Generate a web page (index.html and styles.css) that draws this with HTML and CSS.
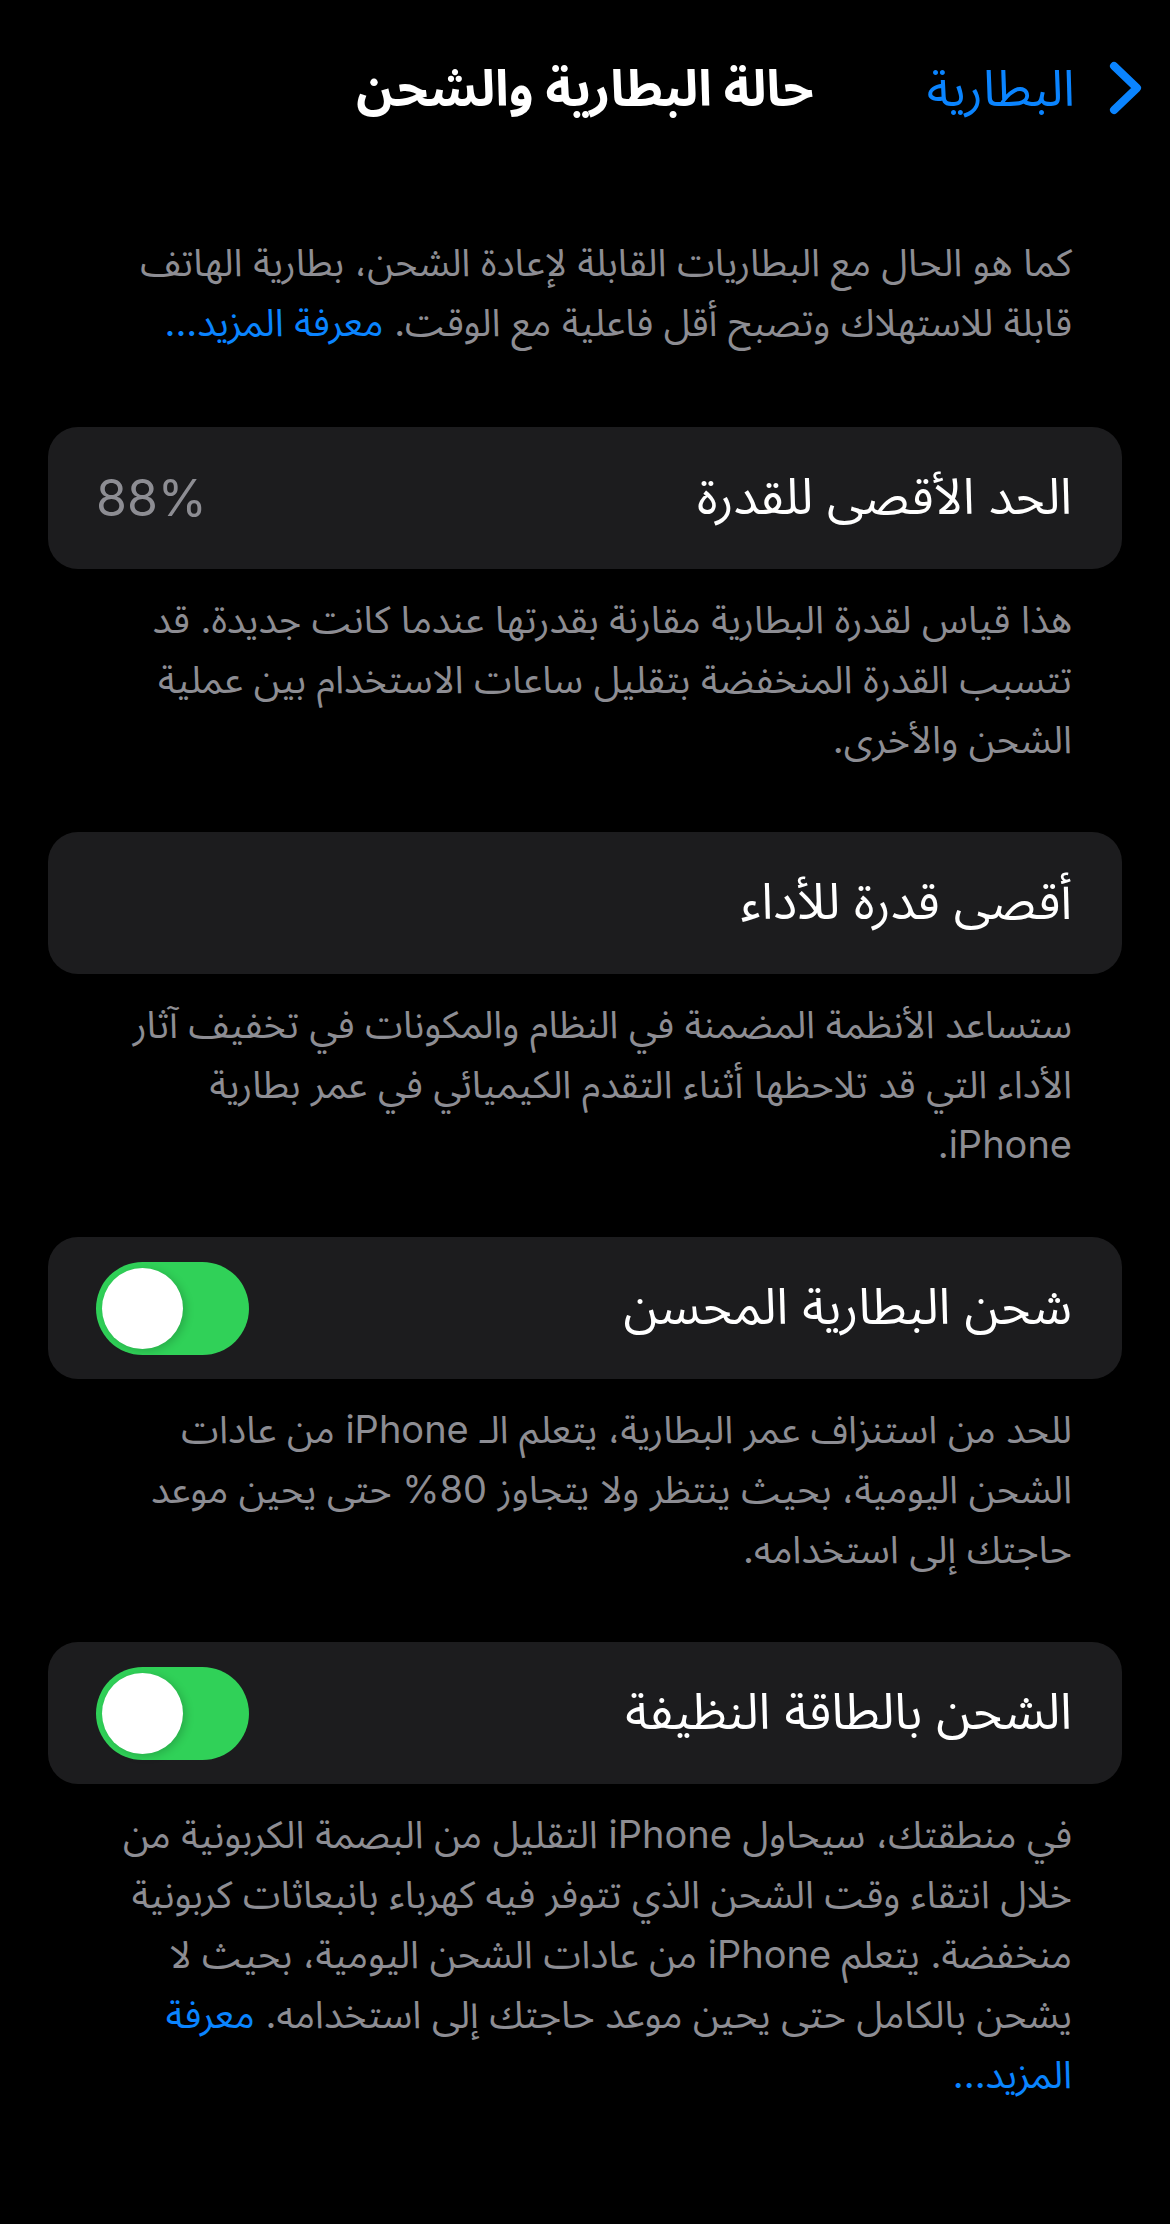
FILE: index.html
```html
<!DOCTYPE html>
<html lang="ar" dir="rtl">
<head>
<meta charset="utf-8">
<title>حالة البطارية والشحن</title>
<link rel="stylesheet" href="styles.css">
</head>
<body>
<div class="screen">
  <header class="nav">
    <a class="back">
      <svg class="chev" width="42" height="64" viewBox="0 0 42 64"><path d="M10 10 L33 32 L10 54" fill="none" stroke="#0a84ff" stroke-width="8" stroke-linecap="round" stroke-linejoin="round"/></svg>
      <span class="back-label">البطارية</span>
    </a>
    <h1 class="title">حالة البطارية والشحن</h1>
    <span class="nav-spacer"></span>
  </header>

  <p class="note intro">كما هو الحال مع البطاريات القابلة لإعادة الشحن، بطارية الهاتف<br>قابلة للاستهلاك وتصبح أقل فاعلية مع الوقت. <span class="link">معرفة المزيد...</span></p>

  <section class="group">
    <div class="cell">
      <span class="label">الحد الأقصى للقدرة</span>
      <span class="value">88%</span>
    </div>
    <p class="note">هذا قياس لقدرة البطارية مقارنة بقدرتها عندما كانت جديدة. قد<br>تتسبب القدرة المنخفضة بتقليل ساعات الاستخدام بين عملية<br>الشحن والأخرى.</p>
  </section>

  <section class="group">
    <div class="cell">
      <span class="label">أقصى قدرة للأداء</span>
    </div>
    <p class="note">ستساعد الأنظمة المضمنة في النظام والمكونات في تخفيف آثار<br>الأداء التي قد تلاحظها أثناء التقدم الكيميائي في عمر بطارية<br>iPhone.</p>
  </section>

  <section class="group">
    <div class="cell">
      <span class="label">شحن البطارية المحسن</span>
      <span class="switch"><span class="knob"></span></span>
    </div>
    <p class="note">للحد من استنزاف عمر البطارية، يتعلم الـ iPhone من عادات<br>الشحن اليومية، بحيث ينتظر ولا يتجاوز 80% حتى يحين موعد<br>حاجتك إلى استخدامه.</p>
  </section>

  <section class="group">
    <div class="cell">
      <span class="label">الشحن بالطاقة النظيفة</span>
      <span class="switch"><span class="knob"></span></span>
    </div>
    <p class="note">في منطقتك، سيحاول iPhone التقليل من البصمة الكربونية من<br>خلال انتقاء وقت الشحن الذي تتوفر فيه كهرباء بانبعاثات كربونية<br>منخفضة. يتعلم iPhone من عادات الشحن اليومية، بحيث لا<br>يشحن بالكامل حتى يحين موعد حاجتك إلى استخدامه. <span class="link">معرفة<br>المزيد...</span></p>
  </section>
</div>
</body>
</html>
```

FILE: styles.css
```css
html, body {
  margin: 0;
  padding: 0;
  background: #000;
}

body {
  font-family: Inter, "Noto Sans Arabic", "DejaVu Sans", sans-serif;
  color: #fff;
  direction: rtl;
}

.screen {
  width: 1170px;
  min-height: 2224px;
  background: #000;
}

.nav {
  height: 176px;
  display: grid;
  grid-template-columns: 1fr auto 1fr;
  align-items: center;
}

.back {
  display: flex;
  align-items: center;
  gap: 29px;
  padding-right: 24px;
  color: #0a84ff;
  text-decoration: none;
}

.chev {
  display: block;
  flex: none;
}

.back-label {
  font-size: 50px;
  line-height: 64px;
  white-space: nowrap;
}

.title {
  margin: 0;
  font-size: 50px;
  font-weight: 700;
  line-height: 64px;
  white-space: nowrap;
}

.note {
  margin: 0;
  padding: 20px 98px 0 60px;
  font-size: 38px;
  line-height: 60px;
  color: #8d8d93;
  white-space: nowrap;
}

.intro {
  padding-top: 0;
  margin-top: 56px;
  margin-bottom: 75px;
}

.link {
  color: #0a84ff;
}

.group {
  margin-bottom: 63px;
}

.cell {
  margin: 0 48px;
  height: 142px;
  box-sizing: border-box;
  padding: 0 50px 0 48px;
  background: #1c1c1e;
  border-radius: 30px;
  display: flex;
  align-items: center;
  justify-content: space-between;
}

.label {
  font-size: 50px;
  white-space: nowrap;
}

.value {
  font-size: 50px;
  color: #8d8d93;
  direction: ltr;
}

.switch {
  width: 153px;
  height: 93px;
  box-sizing: border-box;
  padding: 6px;
  border-radius: 47px;
  background: #30d158;
  display: flex;
  justify-content: flex-end;
  align-items: center;
  flex: none;
}

.knob {
  width: 81px;
  height: 81px;
  border-radius: 50%;
  background: #fff;
  box-shadow: 3px 2px 8px rgba(0, 0, 0, 0.18);
}
```
